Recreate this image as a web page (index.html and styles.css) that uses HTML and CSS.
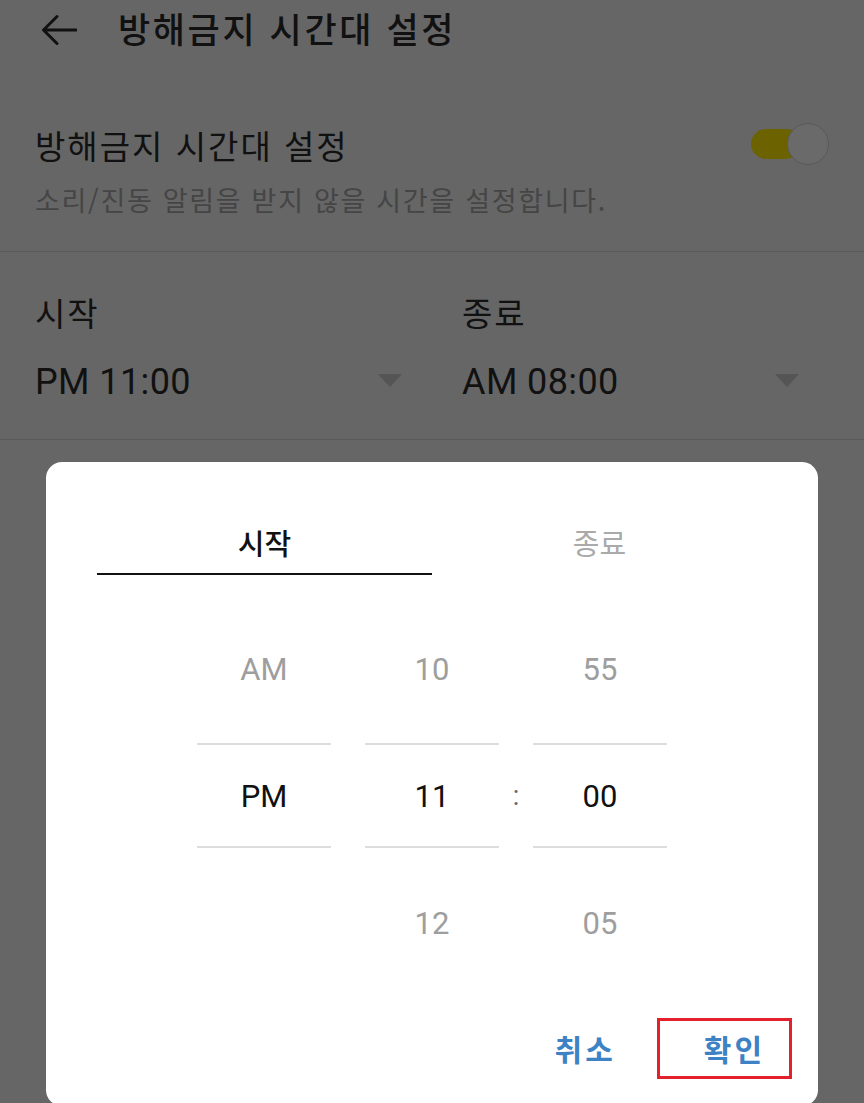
FILE: index.html
```html
<!DOCTYPE html>
<html lang="ko">
<head>
    <meta charset="UTF-8">
    <meta name="viewport" content="width=device-width, initial-scale=1.0">
    <title>방해금지 시간대 설정</title>
    <link rel="stylesheet" href="styles.css">
</head>
<body>
    <div class="screen">
        <header class="app-bar">
            <svg class="back-icon" width="36" height="32" viewBox="0 0 36 32">
                <path d="M35 16H3M16 2.5L2.5 16L16 29.5" fill="none" stroke="#111" stroke-width="3" stroke-linecap="round" stroke-linejoin="round"/>
            </svg>
            <h1 class="app-title">방해금지 시간대 설정</h1>
        </header>

        <section class="setting-row">
            <div class="setting-text">
                <p class="setting-title">방해금지 시간대 설정</p>
                <p class="setting-desc">소리/진동 알림을 받지 않을 시간을 설정합니다.</p>
            </div>
            <div class="switch">
                <span class="switch-track"></span>
                <span class="switch-thumb"></span>
            </div>
        </section>

        <section class="time-range">
            <div class="time-col">
                <p class="time-label">시작</p>
                <div class="time-value">
                    <span>PM 11:00</span>
                    <span class="caret"></span>
                </div>
            </div>
            <div class="time-col time-col-end">
                <p class="time-label">종료</p>
                <div class="time-value">
                    <span>AM 08:00</span>
                    <span class="caret"></span>
                </div>
            </div>
        </section>
    </div>

    <!-- Dialog de seleção de hora -->
    <div class="dialog">
        <div class="tabs">
            <div class="tab tab-active">시작</div>
            <div class="tab">종료</div>
        </div>

        <div class="picker">
            <div class="picker-col">
                <div class="item-prev">AM</div>
                <div class="item-current">PM</div>
                <div class="item-next">&nbsp;</div>
            </div>
            <div class="picker-gap"></div>
            <div class="picker-col">
                <div class="item-prev">10</div>
                <div class="item-current">11</div>
                <div class="item-next">12</div>
            </div>
            <div class="picker-gap">
                <div class="picker-sep">:</div>
            </div>
            <div class="picker-col">
                <div class="item-prev">55</div>
                <div class="item-current">00</div>
                <div class="item-next">05</div>
            </div>
        </div>

        <div class="dialog-actions">
            <button class="btn btn-cancel">취소</button>
            <button class="btn btn-confirm">확인</button>
        </div>
    </div>
</body>
</html>
```

FILE: styles.css
```css
body {
    font-family: "Noto Sans CJK KR", "Noto Sans", sans-serif;
    margin: 0;
    padding: 0;
    background-color: #666666;
    color: #111111;
    height: 1103px;
    overflow: hidden;
}

p {
    margin: 0;
}

/* Barra superior */
.app-bar {
    display: flex;
    align-items: center;
    height: 60px;
    padding-left: 41px;
}

.back-icon {
    display: block;
}

.app-title {
    margin: -4px 0 0 41px;
    font-size: 35px;
    font-weight: 500;
    letter-spacing: 2.6px;
    line-height: 60px;
}

/* Linha do interruptor */
.setting-row {
    display: flex;
    align-items: flex-start;
    justify-content: space-between;
    padding: 63px 35px 33px 35px;
    border-bottom: 1px solid #5b5b5b;
}

.setting-title {
    font-size: 33px;
    letter-spacing: 2px;
    line-height: 44px;
}

.setting-desc {
    margin-top: 15px;
    font-size: 27px;
    letter-spacing: 1.7px;
    line-height: 36px;
    color: #454545;
}

.switch {
    position: relative;
    width: 78px;
    height: 43px;
}

.switch-track {
    position: absolute;
    left: 0;
    top: 6px;
    width: 50px;
    height: 30px;
    border-radius: 15px;
    background-color: #6c6200;
}

.switch-thumb {
    position: absolute;
    right: 0;
    top: 0;
    width: 40px;
    height: 40px;
    border-radius: 50%;
    background-color: #6a6a6a;
    border: 1.5px solid #5a5a5a;
}

/* Início / fim */
.time-range {
    display: grid;
    grid-template-columns: 397px 397px;
    padding: 38px 0 33px 35px;
    border-bottom: 1px solid #5b5b5b;
}

.time-col {
    padding-right: 30px;
}

.time-col-end {
    padding-left: 30px;
}

.time-label {
    font-size: 33px;
    letter-spacing: 2px;
    line-height: 44px;
}

.time-value {
    display: flex;
    align-items: center;
    justify-content: space-between;
    margin-top: 24px;
    font-family: Roboto, "Noto Sans", sans-serif;
    font-size: 36px;
    line-height: 48px;
    letter-spacing: 0.4px;
}

.caret {
    width: 0;
    height: 0;
    border-left: 12px solid transparent;
    border-right: 12px solid transparent;
    border-top: 13px solid #555555;
    margin-top: -4px;
}

/* Dialog */
.dialog {
    position: fixed;
    top: 462px;
    left: 46px;
    width: 772px;
    height: 644px;
    background-color: #fff;
    border-radius: 16px;
}

.tabs {
    display: flex;
    padding: 56px 51px 0 51px;
}

.tab {
    flex: 1;
    text-align: center;
    font-size: 29px;
    line-height: 48px;
    padding-bottom: 7px;
    border-bottom: 2px solid transparent;
    color: #aaaaaa;
}

.tab-active {
    color: #111;
    font-weight: 500;
    border-bottom-color: #111;
}

.picker {
    display: flex;
    justify-content: center;
    margin-top: 22px;
    font-family: Roboto, "Noto Sans", sans-serif;
    font-size: 31px;
    text-align: center;
}

.picker-col {
    width: 134px;
}

.picker-gap {
    width: 34px;
}

.picker-sep {
    margin-top: 148px;
    line-height: 103px;
    font-size: 27px;
    color: #666;
}

.item-prev {
    line-height: 146px;
    color: #9e9e9e;
}

.item-current {
    padding-top: 3px;
    line-height: 98px;
    color: #111;
    border-top: 2px solid #dddddd;
    border-bottom: 2px solid #dddddd;
}

.item-next {
    line-height: 152px;
    color: #9e9e9e;
}

.dialog-actions {
    display: flex;
    justify-content: flex-end;
    align-items: center;
    padding-right: 26px;
    margin-top: 18px;
}

.btn {
    font-family: "Noto Sans CJK KR", sans-serif;
    font-size: 30px;
    font-weight: 700;
    letter-spacing: 3px;
    line-height: 55px;
    color: #3d82c4;
    background: none;
    border: none;
    padding: 0;
    cursor: pointer;
}

.btn-cancel {
    margin-right: 41px;
}

.btn-confirm {
    border: 3px solid #e3202b;
    padding: 0 24px 0 44px;
}
```
